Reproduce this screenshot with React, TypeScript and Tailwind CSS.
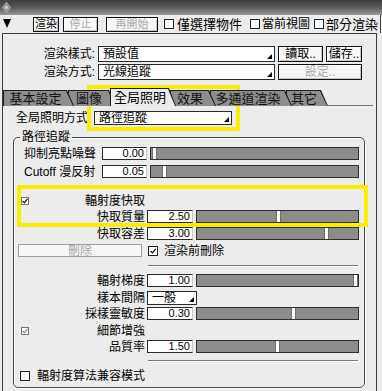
import React from 'react';

type BoxProps = { big?: boolean; checked?: boolean; dim?: boolean };

const CheckBox: React.FC<BoxProps> = ({ big, checked, dim }) => (
  <span
    className={`flex items-center justify-center shrink-0 bg-white ${
      big ? 'w-[10px] h-[10px] border border-[#222]' : 'w-[8px] h-[8px] border border-[#777]'
    }`}
  >
    {checked && (
      <svg width="6" height="6" viewBox="0 0 6 6" className="block">
        <path d="M0.6 3 L2.4 4.9 L5.6 0.8" fill="none" stroke={dim ? '#8a8a8a' : '#111'} strokeWidth="1.2" />
      </svg>
    )}
  </span>
);

const Btn: React.FC<{ children: React.ReactNode; disabled?: boolean; className?: string }> = ({ children, disabled, className = '' }) => (
  <div
    className={`flex items-center justify-center border border-[#111] bg-[#f7f7f7] shadow-[inset_1px_1px_0_#fff,inset_-1px_-1px_0_#c4c4c4] leading-none ${
      disabled ? 'text-[#a8a8a8]' : 'text-black'
    } ${className}`}
  >
    {children}
  </div>
);

const Select: React.FC<{ value: string; className?: string }> = ({ value, className = '' }) => (
  <div className={`flex items-end justify-between bg-white border border-[#2a2a2a] ${className}`}>
    <span className="self-center pl-[4px] text-[12px] leading-none">{value}</span>
    <span className="w-[5px] h-[5px] mb-[2px] mr-[2px] bg-black [clip-path:polygon(100%_0,100%_100%,0_100%)]" />
  </div>
);

const Field: React.FC<{ value: string; className?: string }> = ({ value, className = '' }) => (
  <div
    className={`flex items-center justify-end h-full bg-white border border-[#2a2a2a] border-r-[#c8c8c8] pr-[2px] text-[11px] leading-none ${className}`}
  >
    {value}
  </div>
);

const Slider: React.FC<{ pos: number; className?: string }> = ({ pos, className = '' }) => (
  <div className={`relative h-full bg-[#8c8c8c] border border-[#2e2e2e] ${className}`}>
    <div className="absolute top-0 bottom-0 w-[5px] bg-white border-x border-[#6e6e6e]" style={{ left: pos }} />
  </div>
);

const Sep: React.FC<{ className?: string }> = ({ className = '' }) => (
  <div className={`h-[2px] border-t border-[#7a7a7a] border-b border-b-white ${className}`} />
);

const tabs = [
  { label: '基本設定', w: 'w-[71px]', z: 'z-[6]' },
  { label: '圖像', w: 'w-[48px]', z: 'z-[5]' },
  { label: '全局照明', w: 'w-[66px]', z: 'z-10', active: true },
  { label: '效果', w: 'w-[46px]', z: 'z-[3]' },
  { label: '多通道渲染', w: 'w-[82px]', z: 'z-[2]' },
  { label: '其它', w: 'w-[42px]', z: 'z-[1]' },
];

const LowRow: React.FC<{ label: string; value: string; pos: number; className?: string }> = ({ label, value, pos, className = '' }) => (
  <div className={`flex items-center h-[13px] ${className}`}>
    <div className="w-[133px] pr-[2px] text-right text-[12px] leading-none">{label}</div>
    <Field value={value} className="w-[46px]" />
    <Slider pos={pos} className="ml-[3px] w-[163px]" />
  </div>
);

export default function App() {
  return (
    <div className="relative w-[382px] h-[391px] overflow-hidden bg-[#ececec] text-black font-['Liberation_Sans','Noto_Sans_CJK_TC',sans-serif]">
      {/* title bar */}
      <div className="h-[15px] bg-linear-to-b from-[#3e3e3e] via-[#5a5a5a] to-[#9a9a9a] flex items-center pl-[2px]">
        <svg width="9" height="11" viewBox="0 0 9 11">
          <path d="M4.5 0.5 L8.5 5.5 L4.5 10.5 L0.5 5.5 Z" fill="#8a8a8a" stroke="#b5b5b5" />
          <path d="M4.5 3 L6.5 5.5 L4.5 8 L2.5 5.5 Z" fill="#d0d0d0" />
        </svg>
      </div>

      {/* toolbar */}
      <div className="w-[381px] h-[18px] border-r border-[#444] flex items-center pl-[3px]">
        <svg width="8" height="9" viewBox="0 0 8 9" className="mb-[2px]">
          <path d="M0 0 H8 L4 9 Z" fill="#000" />
        </svg>
        <Btn className="ml-[22px] w-[26px] h-[15px] text-[11px]">渲染</Btn>
        <Btn disabled className="ml-[4px] w-[35px] h-[15px] text-[11px]">停止</Btn>
        <Btn disabled className="ml-[8px] w-[52px] h-[15px] text-[11px]">再開始</Btn>
        <span className="ml-[6px]"><CheckBox big /></span>
        <span className="ml-[3px] text-[13px] leading-none">僅選擇物件</span>
        <span className="ml-[8px]"><CheckBox big /></span>
        <span className="ml-[2px] text-[12px] leading-none">當前視圖</span>
        <span className="ml-[4px]"><CheckBox big /></span>
        <span className="ml-[2px] text-[13px] leading-none">部分渲染</span>
      </div>

      {/* main panel */}
      <div className="ml-[2px] w-[375px] h-[358px] border-l border-t border-r border-[#3a3a3a]">
        <div className="flex items-center mt-[12px] h-[16px]">
          <div className="w-[95px] pr-[3px] text-right text-[12px] leading-none">渲染樣式:</div>
          <Select value="預設值" className="w-[177px] h-full" />
          <Btn className="ml-[3px] w-[45px] h-full text-[12px]">讀取..</Btn>
          <Btn className="ml-[3px] w-[36px] h-full text-[12px]">儲存..</Btn>
        </div>
        <div className="flex items-center mt-[2px] h-[16px]">
          <div className="w-[95px] pr-[3px] text-right text-[12px] leading-none">渲染方式:</div>
          <Select value="光線追蹤" className="w-[177px] h-full" />
          <Btn disabled className="ml-[3px] w-[84px] h-full text-[12px]">設定..</Btn>
        </div>

        {/* tabs */}
        <div className="flex items-end mt-[8px] h-[18px]">
          {tabs.map((t, i) => (
            <div
              key={t.label}
              className={`relative ${t.w} ${t.z} ${t.active ? 'h-[18px]' : 'h-[16px]'} ${
                i === 0 ? '' : '-ml-[6px]'
              } bg-[#1e1e1e] pl-px pt-px [clip-path:polygon(0_0,calc(100%_-_7px)_0,100%_100%,0_100%)]`}
            >
              <div
                className={`h-full flex items-center justify-center pr-[7px] text-[13px] leading-none ${
                  t.active ? 'bg-[#ececec]' : 'bg-[#8d8d8d] text-[#111]'
                } [clip-path:polygon(0_0,calc(100%_-_8px)_0,calc(100%_-_1px)_100%,0_100%)]`}
              >
                {t.label}
              </div>
            </div>
          ))}
          <div className="flex-1 mr-[3px] border-b border-[#777]" />
        </div>

        <div className="flex items-center mt-[5px] h-[14px] pl-[13px]">
          <div className="w-[78px] text-[12px] leading-none">全局照明方式</div>
          <Select value="路徑追蹤" className="w-[138px] h-full" />
        </div>

        {/* group */}
        <div className="relative ml-[10px] mt-[12px] w-[352px] h-[251px] border border-[#4a4a4a] rounded-[5px] shadow-[1px_1px_0_#fff,inset_1px_1px_0_#fff]">
          <div className="absolute left-[6px] -top-[9px] px-[2px] bg-[#ececec] text-[12px] leading-[16px]">路徑追蹤</div>

          <div className="flex items-center mt-[9px] h-[13px]">
            <div className="w-[88px] pl-[10px] text-[12px] leading-none">抑制亮點噪聲</div>
            <Field value="0.00" className="w-[45px]" />
            <Slider pos={1} className="ml-[3px] w-[209px]" />
          </div>
          <div className="flex items-center mt-[5px] h-[13px]">
            <div className="w-[88px] pl-[10px] text-[12px] leading-none">Cutoff 漫反射</div>
            <Field value="0.05" className="w-[45px]" />
            <Slider pos={11} className="ml-[3px] w-[209px]" />
          </div>

          <Sep className="mt-[8px] ml-[6px] w-[338px]" />

          <div className="flex items-center mt-[6px] h-[14px]">
            <div className="w-[133px] flex items-center justify-between pl-[7px] pr-[2px]">
              <CheckBox checked />
              <span className="text-[12px] leading-none">輻射度快取</span>
            </div>
          </div>
          <LowRow label="快取質量" value="2.50" pos={79} className="mt-[2px]" />
          <LowRow label="快取容差" value="3.00" pos={127} className="mt-[4px]" />

          <div className="flex items-center mt-[4px] h-[13px]">
            <Btn disabled className="ml-[4px] w-[124px] h-full text-[12px] bg-[#ececec] border-[#a0a0a0] shadow-none">刪除</Btn>
            <span className="ml-[6px]"><CheckBox big checked /></span>
            <span className="ml-[6px] text-[12px] leading-none">渲染前刪除</span>
          </div>

          <Sep className="mt-[8px] ml-[134px] w-[210px]" />

          <LowRow label="輻射梯度" value="1.00" pos={156} className="mt-[7px]" />
          <div className="flex items-center mt-[4px] h-[14px]">
            <div className="w-[133px] pr-[2px] text-right text-[12px] leading-none">樣本間隔</div>
            <Select value="一般" className="w-[50px] h-full" />
          </div>
          <LowRow label="採樣靈敏度" value="0.30" pos={94} className="mt-[2px]" />
          <div className="flex items-center mt-[4px] h-[13px]">
            <div className="w-[133px] flex items-center justify-between pl-[7px] pr-[2px]">
              <CheckBox checked dim />
              <span className="text-[12px] leading-none">細節增強</span>
            </div>
          </div>
          <LowRow label="品質率" value="1.50" pos={78} className="mt-[3px]" />

          <Sep className="mt-[7px] ml-[134px] w-[210px]" />

          <div className="flex items-center mt-[7px] h-[14px] pl-[6px]">
            <CheckBox big />
            <span className="ml-[7px] text-[12px] leading-none">輻射度算法兼容模式</span>
          </div>
        </div>
      </div>

      {/* yellow annotation boxes */}
      <div className="absolute left-[87px] top-[85px] w-[153px] h-[46px] border-[4px] border-[#f8ef00]" />
      <div className="absolute left-[17px] top-[185px] w-[351px] h-[42px] border-[4px] border-[#f8ef00]" />
    </div>
  );
}
